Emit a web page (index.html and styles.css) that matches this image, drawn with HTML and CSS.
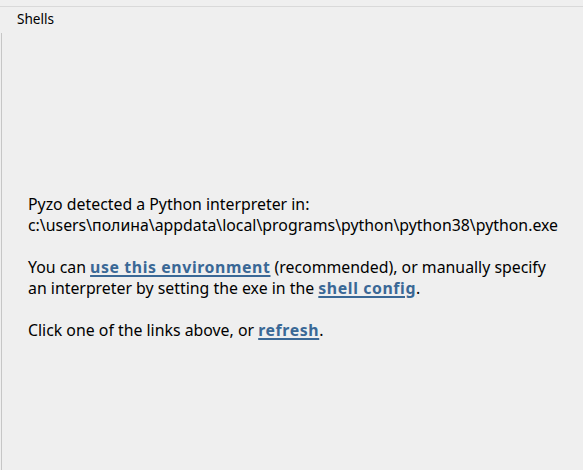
FILE: index.html
```html
<!DOCTYPE html>
<html>
<head>
<meta charset="utf-8">
<link rel="stylesheet" href="styles.css">
</head>
<body>
<div class="tabbar">
  <div class="tab">Shells</div>
</div>
<div class="panel">
  <div class="msg">
    <p>Pyzo detected a Python interpreter in:<br>c:\users\полина\appdata\local\programs\python\python38\python.exe</p>
    <p>You can <a href="#">use this environment</a> (recommended), or manually specify<br>an interpreter by setting the exe in the <a href="#">shell config</a>.</p>
    <p>Click one of the links above, or <a href="#">refresh</a>.</p>
  </div>
</div>
</body>
</html>
```
FILE: styles.css
```css
html, body {
  margin: 0;
  padding: 0;
  height: 100%;
  background: #efefef;
  font-family: "Noto Sans", "Open Sans", sans-serif;
  color: #000;
  overflow: hidden;
}
body {
  display: flex;
  flex-direction: column;
}
.tabbar {
  margin-top: 6px;
  border-top: 1px solid #d9d9d9;
  height: 26px;
  flex: none;
}
.tab {
  padding-left: 17px;
  padding-top: 3px;
  font-size: 13.6px;
  line-height: 17px;
}
.panel {
  flex: 1;
  min-height: 0;
  margin-left: 1px;
  border-left: 1px solid #c6c6c6;
  display: flex;
}
.msg {
  padding-top: 160px;
  padding-left: 26px;
  font-size: 15.85px;
  line-height: 21px;
  border-top: 1px solid transparent;
}
.msg p {
  margin: 0 0 21px 0;
  white-space: nowrap;
}
.msg a {
  color: #3a6896;
  font-weight: bold;
  letter-spacing: 0.6px;
  text-decoration: underline;
  text-decoration-thickness: 2px;
  text-underline-offset: 2px;
}
```
